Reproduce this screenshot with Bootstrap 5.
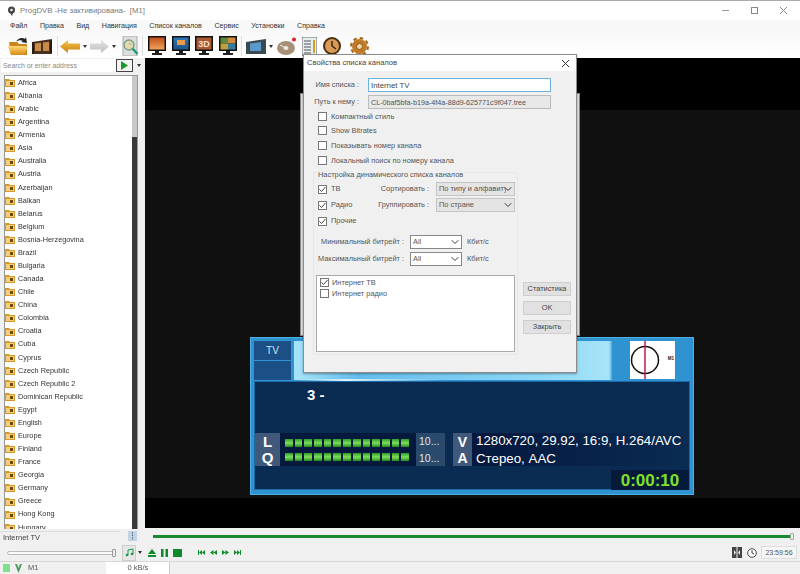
<!DOCTYPE html>
<html lang="ru">
<head>
    <meta charset="UTF-8">
    <meta name="viewport" content="width=device-width, initial-scale=1.0">
    <title>ProgDVB</title>
    <link href="https://cdn.jsdelivr.net/npm/bootstrap@5.3.0/dist/css/bootstrap.min.css" rel="stylesheet">
    <style>
        html, body { margin: 0; width: 800px; height: 574px; overflow: hidden; background: #f0f0f0; }
        body, .form-control, .form-select, .btn { font-family: "Liberation Sans", Arial, sans-serif; font-size: 7.4px; color: #333; line-height: 1; }
        .app-win { width: 800px; height: 574px; position: relative; overflow: hidden; filter: blur(.4px); }

        /* window chrome */
        .title-row { height: 20px; background: #fff; border-top: 1px solid #aaa; padding: 0 7px; color: #7a7a7a; font-size: 7.8px; }
        .win-btns { gap: 20px; margin-right: 5px; }
        .menu-row { height: 14px; background: #f8f8f8; padding-left: 10px; gap: 12.5px; font-size: 7.1px; color: #333; }
        .tool-row { height: 24px; background: linear-gradient(#f9f9f9, #fff); padding-left: 8px; }
        .tb-sep { width: 1px; height: 20px; background: #ddd; }
        .tb-caret { width: 0; height: 0; border: 2.5px solid transparent; border-top: 3px solid #333; border-bottom: 0; }
        .ml2 { margin-left: 2px; } .ml3 { margin-left: 3px; } .ml4 { margin-left: 4px; } .ml5 { margin-left: 5px; }
        .ml6 { margin-left: 6px; } .ml8 { margin-left: 8px; } .ml9 { margin-left: 9px; }

        /* left panel */
        .main-row { height: 470px; }
        .side-panel { width: 145px; background: #f0f0f0; }
        .search-row { height: 13px; margin: 1px 0 3px 1px; }
        .search-box.form-control { width: 115px; height: 13px; padding: 0 2px; border: 0; border-radius: 0; color: #888; background: #fff; font-size: 6.9px; }
        .search-box.form-control::placeholder { color: #888; opacity: 1; }
        .search-go { width: 17px; height: 13px; border: 1px solid #444; background: #f4f4f4; }
        .chan-box { margin-left: 4px; width: 134px; height: 454px; background: #fff; border: 1px solid #999; border-bottom: 0; position: relative; overflow: hidden; }
        .chan-list .list-group-item { border: 0; background: none; padding: 0; height: 13.09px; gap: 3px; border-radius: 0; font-size: 7.3px; color: #333; }
        .chan-scroll { position: absolute; right: 0; top: 0; bottom: 0; width: 5px; background: linear-gradient(#c8c8c8 61px, #3a3a3a 61px); }
        .video-area { flex: 1; background: linear-gradient(#000 52px, #101010 52px, #101010 440px, #000 440px); position: relative; }

        /* bottom */
        .seek-row { height: 16px; }
        .seek-name { width: 120px; height: 13px; margin-top: 3px; border-top: 1px solid #ddd; padding-left: 3px; font-size: 7.5px; color: #444; }
        .seek-track { width: 639px; height: 3px; background: #1a8a2e; margin-left: 16px; position: relative; }
        .seek-thumb { position: absolute; right: -2px; top: -2px; width: 4px; height: 7px; border: 1px solid #9a9; background: #eee; border-radius: 1px; }
        .ctl-row { height: 17px; padding-left: 7px; }
        .vol-track { width: 108px; height: 4px; background: #fafafa; border: 1px solid #bbb; position: relative; border-radius: 2px; }
        .vol-thumb { position: absolute; right: -2px; top: -3px; width: 4px; height: 8px; background: #eee; border: 1px solid #999; border-radius: 1px; }
        .note-btn { width: 14px; height: 16px; margin-left: 7px; background: #e6e6e6; border: 1px solid #ccc; }
        .time-box { width: 36px; height: 13px; margin-left: 4px; margin-right: 3px; background: #f5f5f5; border: 1px solid #ddd; font-size: 7px; color: #555; }
        .stat-row { height: 13px; border-top: 1px solid #d6d6d6; padding-left: 3px; color: #555; font-size: 7.5px; }
        .stat-led { width: 7px; height: 8px; background: #7fe08a; }
        .stat-rate { width: 64px; height: 12px; background: #fff; margin-left: 68px; border-right: 1px solid #ccc; }

        /* dialog */
        .back-sheet { position: absolute; left: 155px; top: 35px; width: 280px; height: 243px; background: #ddd; border: 1px solid #888; }
        .prop-dlg { position: absolute; left: 303px; top: 54px; width: 274px; height: 319px; background: #f0f0f0; border: 1px solid #8c8c8c; box-shadow: 0 1px 2px rgba(0,0,0,.35); z-index: 5; }
        .dlg-title { height: 16px; background: #fff; padding: 0 6px 0 3px; font-size: 7.6px; color: #444; }
        .dlg-body { padding: 7px 0 0 12px; color: #555; }
        .dlg-line { height: 14px; }
        .dlg-line + .dlg-line { margin-top: 3px; }
        .dlg-lab { width: 43px; text-align: right; margin-right: 9px; white-space: nowrap; justify-content: flex-end; display: flex; }
        .dlg-input.form-control { width: 183px; height: 14px; padding: 0 2px; border-radius: 0; font-size: 7.8px; color: #444; border: 1px solid #6fb1dd; box-shadow: none; }
        .dlg-input.dlg-ro { background: #e8e8e8; border-color: #bbb; color: #555; font-size: 7.2px; }
        .chk-line { height: 15px; padding-left: 2px; gap: 4px; }
        .chk-line.chk-first { height: 13px; margin-top: 1px; }
        .form-check-input.dlg-chk { width: 9px; height: 9px; margin: 0; border-radius: 0; border: 1px solid #777; background-color: #fff; flex: none; }
        .form-check-input.dlg-chk:checked { background-color: #fff; border-color: #777; background-size: 9px; background-image: url("data:image/svg+xml,%3csvg xmlns='http://www.w3.org/2000/svg' viewBox='0 0 9 9'%3e%3cpath d='M1.5 4.5l2 2 4-4.5' fill='none' stroke='%23444' stroke-width='1'/%3e%3c/svg%3e"); }
        .form-check-input.dlg-chk:focus { box-shadow: none; }
        .dyn-group { width: 205px; height: 183px; margin: 4px 0 0 -3px; padding: 0 2px 0 4px; border: 1px solid #e7e7e7; border-radius: 2px; }
        .dyn-legend { height: 10px; width: fit-content; margin-top: -2px; background: #f0f0f0; padding-right: 2px; }
        .dyn-line { height: 16px; }
        .dyn-lab { width: 60px; margin-left: auto; text-align: right; margin-right: 7px; }
        .dlg-sel.form-select { width: 79px; height: 14px; padding: 0 8px 0 2px; border-radius: 0; font-size: 7.4px; color: #555; background-color: #e4e4e4; border: 1px solid #c4c4c4; background-position: right 2px center; background-size: 8px 8px; }
        .dlg-sel.sel-white { width: 52px; background-color: #fff; border-color: #888; }
        .rate-line { height: 14px; margin-top: 3px; }
        .rate-first { margin-top: 6px; }
        .rate-lab { width: 86px; text-align: right; margin-right: 6px; white-space: nowrap; }
        .rate-unit { margin-left: 5px; }
        .src-list { width: 199px; height: 77px; margin: 9px 0 0 -2px; background: #fff; border: 1px solid #aaa; padding: 1px 3px; }
        .src-item { height: 11px; gap: 3px; }
        .dlg-btns { width: 48px; margin: 114px 0 0 5px; gap: 5px; }
        .dlg-btn.btn { height: 14px; padding: 0; border-radius: 0; background: #e1e1e1; border: 1px solid #cfcfcf; font-size: 7.4px; color: #444; line-height: 1; }

        /* on-screen info */
        .osd-box { position: absolute; left: 250px; top: 337px; width: 444px; height: 158px; background: #2f93d2; border: 1px solid #4fb0e4; padding: 3px; color: #fff; z-index: 2; }
        .osd-head { height: 39px; position: relative; }
        .osd-head::after { content: ""; position: absolute; left: 40px; right: 60px; bottom: -1px; height: 2px; background: linear-gradient(90deg, transparent, #dff4fd 15%, transparent 45%); }
        .osd-tv { width: 37px; margin-right: 3px; gap: 1px; }
        .osd-tv > div { flex: 1; background: #1c4f86; font-size: 10px; color: #cfe6f6; }
        .osd-glass { width: 318px; background: linear-gradient(90deg, #a8e4f9, #63bdec 20%, #8fd9f6 80%, #a8e4f9 99%, #4aa8dc); }
        .osd-logo { width: 45px; height: 38px; margin-left: 18px; background: #fff; position: relative; }
        .osd-m1 { position: absolute; right: 1px; top: 16px; font-size: 4.5px; font-weight: 700; color: #222; }
        .osd-panel { height: 109px; margin-top: 1px; background: #0a2b52; border: 1px solid #1f6aa6; }
        .osd-num { height: 25px; padding-left: 52px; font-size: 15px; font-weight: 700; }
        .osd-mid { height: 33px; margin-top: 26px; }
        .osd-lq { width: 25px; background: #40597a; font-size: 15px; font-weight: 700; line-height: 16px; }
        .osd-bars { width: 136px; background: #05193c; gap: 6px; padding-left: 5px; }
        .osd-bar-row { gap: 2px; }
        .osd-seg { width: 7.7px; height: 8px; background: linear-gradient(#2d9a2a, #7fe05a 50%, #1f8a20); }
        .osd-pct { width: 29px; background: #2b4a6b; font-size: 10.5px; padding-left: 3px; gap: 6px; color: #dfe8f0; }
        .osd-va { width: 19px; margin-left: 8px; background: #40597a; font-size: 14px; font-weight: 700; line-height: 16px; }
        .osd-info { flex: 1; background: linear-gradient(90deg, #05183e, #0a2b52); padding-left: 4px; font-size: 13.3px; gap: 4px; white-space: nowrap; }
        .osd-foot { height: 20px; margin-top: 4px; }
        .osd-timer { width: 78px; background: #061a3a; color: #7fe02a; font-size: 17px; font-weight: 700; }
    </style>
</head>
<body>
<svg width="0" height="0" class="position-absolute">
    <defs>
        <linearGradient id="gFold" x1="0" y1="0" x2="0" y2="1"><stop offset="0" stop-color="#ffd977"/><stop offset="1" stop-color="#d88a14"/></linearGradient>
        <linearGradient id="gBack" x1="0" y1="0" x2="0" y2="1"><stop offset="0" stop-color="#f7c94a"/><stop offset="1" stop-color="#c97d0c"/></linearGradient>
        <linearGradient id="gFwd" x1="0" y1="0" x2="0" y2="1"><stop offset="0" stop-color="#e6e6e6"/><stop offset="1" stop-color="#bdbdbd"/></linearGradient>
        <linearGradient id="gSun" x1="0" y1="0" x2="0" y2="1"><stop offset="0" stop-color="#c0501c"/><stop offset="1" stop-color="#f2a45c"/></linearGradient>
        <linearGradient id="gBlue" x1="0" y1="0" x2="0" y2="1"><stop offset="0" stop-color="#2f78b8"/><stop offset="1" stop-color="#1c5288"/></linearGradient>
        <symbol id="icoFolder" viewBox="0 0 10 9"><path d="M0 1h4l1 1h5v7H0z" fill="#d69a2c"/><path d="M1 3h8v5H1z" fill="#f5cf78"/><path d="M5 4h3v3H5z" fill="#6a4a12"/></symbol>
        <symbol id="icoFilm" viewBox="0 0 20 15"><path d="M0 3l20-3v15H0z" fill="#4a3020"/><path d="M3 4.500l6-.8v8.300H3zM11 3.500l6-.8v9.300h-6z" fill="#c98a4a"/><path d="M0 3h2v12H0zM18 1h2v13h-2z" fill="#2a1a10"/></symbol>
        <symbol id="icoMon" viewBox="0 0 18 20"><path d="M0 0h18v15H0z" fill="#111"/><path d="M7 15h4v2h3v2H4v-2h3z" fill="#222"/></symbol>
    </defs>
</svg>

<div class="app-win">
    <div class="title-row d-flex align-items-center">
        <svg width="9" height="10" viewBox="0 0 9 10"><circle cx="4.500" cy="4" r="3.500" fill="#444"/><circle cx="4.500" cy="4" r="1.300" fill="#eee"/><path d="M3 7l2 3 1-3z" fill="#444"/></svg>
        <span class="ml4">ProgDVB -Не зактивирована-&nbsp; [M1]</span>
        <div class="win-btns d-flex align-items-center ms-auto">
            <svg width="9" height="9" viewBox="0 0 9 9"><path d="M1 4.500h7" stroke="#999"/></svg>
            <svg width="9" height="9" viewBox="0 0 9 9"><rect x="1.500" y="1.500" width="6" height="6" fill="none" stroke="#888"/></svg>
            <svg width="9" height="9" viewBox="0 0 9 9"><path d="M1 1l7 7M8 1L1 8" stroke="#888"/></svg>
        </div>
    </div>

    <div class="menu-row d-flex align-items-center">
        <span>Файл</span><span>Правка</span><span>Вид</span><span>Навигация</span><span>Список каналов</span><span>Сервис</span><span>Установки</span><span>Справка</span>
    </div>

    <div class="tool-row d-flex align-items-center">
        <svg width="22" height="20" viewBox="0 0 22 20"><path d="M1 6h8l2 2h8v11H3z" fill="#c9851a"/><path d="M0 10h17l3 1-4 8H3z" fill="url(#gFold)"/><path d="M8 6c2-4 6-5 9-3l1-2 1 6-6-1 2-1c-2-1-5-1-7 1z" fill="#222"/></svg>
        <svg width="20" height="15" class="ml2"><use href="#icoFilm"/></svg>
        <div class="tb-sep ml5"></div>
        <svg width="20" height="13" viewBox="0 0 20 13" class="ml2"><path d="M0 6.500L8 0v3.500h12v6H8V13z" fill="url(#gBack)"/></svg>
        <span class="tb-caret ml3"></span>
        <svg width="19" height="13" viewBox="0 0 19 13" class="ml3"><path d="M19 6.500L11 0v3.500H0v6h11V13z" fill="url(#gFwd)"/></svg>
        <span class="tb-caret ml3"></span>
        <svg width="18" height="20" viewBox="0 0 18 20" class="ml5"><path d="M2 0h14v20H2z" fill="#dcdedc" stroke="#a9aca9"/><circle cx="8" cy="9" r="5" fill="#e8d8a8" stroke="#7aa094" stroke-width="1.500"/><path d="M8 6v3h3" fill="#9ac4d8"/><path d="M11.500 12.500l5 5.500" stroke="#1f9a78" stroke-width="2.500"/></svg>
        <div class="tb-sep ml3"></div>
        <svg width="18" height="20" class="ml5"><use href="#icoMon"/><rect x="1.500" y="1.500" width="15" height="12" fill="url(#gSun)"/></svg>
        <svg width="18" height="20" class="ml6"><use href="#icoMon"/><rect x="1.500" y="1.500" width="15" height="12" fill="url(#gBlue)"/><rect x="5" y="4" width="8" height="5" fill="#e89a4a"/></svg>
        <svg width="18" height="20" class="ml5"><use href="#icoMon"/><rect x="1.500" y="1.500" width="15" height="12" fill="#a85a34"/><text x="9" y="11" text-anchor="middle" font-family="Liberation Sans" font-size="9" font-weight="700" fill="#f2dcc8">3D</text></svg>
        <svg width="18" height="20" class="ml6"><use href="#icoMon"/><rect x="1.500" y="1.500" width="7.500" height="6" fill="#5d8a3a"/><rect x="9" y="1.500" width="7.500" height="6" fill="#d08a3a"/><rect x="1.500" y="7.500" width="7.500" height="6" fill="#c0a03a"/><rect x="9" y="7.500" width="7.500" height="6" fill="#3a7a9a"/></svg>
        <div class="tb-sep ml4"></div>
        <svg width="20" height="15" viewBox="0 0 20 15" class="ml4"><path d="M0 3l20-3v15H0z" fill="#3a4a50"/><path d="M4 4.500l11-1.500v9H4z" fill="#5a9ac8"/></svg>
        <span class="tb-caret ml3"></span>
        <svg width="20" height="18" viewBox="0 0 20 18" class="ml4"><ellipse cx="9" cy="11" rx="9" ry="7" fill="#a89078"/><ellipse cx="9" cy="11" rx="2.500" ry="2" fill="#f0e8de"/><path d="M3 8l4 2" stroke="#eee"/><circle cx="17" cy="2.500" r="2" fill="#e02020"/></svg>
        <svg width="15" height="19" viewBox="0 0 15 19" class="ml5"><path d="M0 0h15v19H0z" fill="#e8efe8" stroke="#667"/><path d="M2 4h7M2 7h7M2 10h7M2 13h7M2 16h7" stroke="#556"/><path d="M11 3h2v13h-2z" fill="#d8a020"/></svg>
        <svg width="18" height="18" viewBox="0 0 18 18" class="ml6"><circle cx="9" cy="9" r="8" fill="#d89a54" stroke="#4a2e14" stroke-width="2"/><path d="M9 9V4M9 9l4 3" stroke="#3a2410" stroke-width="1.500"/></svg>
        <svg width="19" height="19" viewBox="0 0 19 19" class="ml9"><circle cx="9.500" cy="9.500" r="7.500" fill="#c07a28"/><circle cx="9.500" cy="9.500" r="8.500" fill="none" stroke="#a8651c" stroke-width="2" stroke-dasharray="3.500 3.170"/><circle cx="9.500" cy="9.500" r="3" fill="#f2d8a8" stroke="#8a5414"/></svg>
    </div>

    <div class="main-row d-flex">
        <div class="side-panel">
            <div class="search-row d-flex align-items-center">
                <input class="search-box form-control" type="text" placeholder="Search or enter address">
                <div class="search-go d-flex align-items-center justify-content-center">
                    <svg width="7" height="9" viewBox="0 0 7 9"><path d="M0 0l7 4.500L0 9z" fill="#1a9a2a"/></svg>
                </div>
                <span class="tb-caret ml4"></span>
            </div>
            <div class="chan-box">
                <div id="chanList" class="chan-list list-group"></div>
                <div class="chan-scroll"></div>
            </div>
        </div>
        <div class="video-area">
            <div class="back-sheet"></div>
        </div>
    </div>

    <div class="seek-row d-flex align-items-center">
        <div class="seek-name d-flex align-items-center">Internet TV</div>
        <svg width="9" height="10" viewBox="0 0 9 10" class="ml8"><rect width="9" height="10" fill="#c4d4e4"/><path d="M4.500 1v8" stroke="#47688a" stroke-dasharray="1.500 1"/></svg>
        <div class="seek-track"><span class="seek-thumb"></span></div>
    </div>

    <div class="ctl-row d-flex align-items-center">
        <div class="vol-track"><span class="vol-thumb"></span></div>
        <div class="note-btn d-flex align-items-center justify-content-center">
            <svg width="9" height="9" viewBox="0 0 9 9"><path d="M3 7V2l5-1v5" fill="none" stroke="#1a9a4a"/><circle cx="2" cy="7" r="1.300" fill="#1a9a4a"/><circle cx="7" cy="6" r="1.300" fill="#1a9a4a"/></svg>
        </div>
        <span class="tb-caret ml2"></span>
        <svg width="8" height="8" viewBox="0 0 8 8" class="ml6"><path d="M4 0l4 5H0zM0 6h8v2H0z" fill="#0f8a2a"/></svg>
        <svg width="7" height="8" viewBox="0 0 7 8" class="ml5"><path d="M0 0h2.500v8H0zM4.500 0H7v8H4.500z" fill="#0f8a2a"/></svg>
        <svg width="9" height="8" viewBox="0 0 9 8" class="ml5"><path d="M0 0h9v8H0z" fill="#0f8a2a"/></svg>
        <svg width="7" height="5" viewBox="0 0 7 5" class="ms-3"><path d="M0 0h1v5H0zM4 0v5L1 2.500zM7 0v5L4 2.500z" fill="#0f8a2a"/></svg>
        <svg width="7" height="5" viewBox="0 0 7 5" class="ml5"><path d="M3.500 0v5L0 2.500zM7 0v5L3.500 2.500z" fill="#0f8a2a"/></svg>
        <svg width="7" height="5" viewBox="0 0 7 5" class="ml5"><path d="M0 0v5l3.500-2.500zM3.500 0v5L7 2.500z" fill="#0f8a2a"/></svg>
        <svg width="7" height="5" viewBox="0 0 7 5" class="ml5"><path d="M0 0v5l3-2.500zM3 0v5l3-2.500zM6 0h1v5H6z" fill="#0f8a2a"/></svg>
        <svg width="10" height="11" viewBox="0 0 10 11" class="ms-auto"><rect width="10" height="11" fill="#444"/><path d="M5 0v11" stroke="#eee"/><path d="M2 3v5l2-2.500zM8 3v5L6 5.500z" fill="#eee"/></svg>
        <svg width="10" height="10" viewBox="0 0 10 10" class="ml5"><circle cx="5" cy="5" r="4.300" fill="#fff" stroke="#444"/><path d="M5 2v3l2 1" fill="none" stroke="#444"/></svg>
        <div class="time-box d-flex align-items-center justify-content-center">23:59:56</div>
    </div>

    <div class="stat-row d-flex align-items-center">
        <span class="stat-led"></span>
        <svg width="7" height="9" viewBox="0 0 7 9" class="ml5"><path d="M0 0l3.500 9L7 0H5L3.500 4 2 0z" fill="#4a9a5a"/></svg>
        <span class="ml6">M1</span>
        <div class="stat-rate d-flex align-items-center justify-content-center">0 kB/s</div>
    </div>

    <!-- Channel list properties dialog -->
    <div class="prop-dlg">
        <div class="dlg-title d-flex align-items-center justify-content-between">
            <span>Свойства списка каналов</span>
            <svg width="9" height="9" viewBox="0 0 9 9"><path d="M1 1l7 7M8 1L1 8" stroke="#333"/></svg>
        </div>
        <div class="dlg-body">
            <div class="dlg-line d-flex align-items-center">
                <span class="dlg-lab">Имя списка :</span>
                <input class="dlg-input form-control" type="text" value="Internet TV">
            </div>
            <div class="dlg-line d-flex align-items-center">
                <span class="dlg-lab">Путь к нему :</span>
                <input class="dlg-input dlg-ro form-control" type="text" readonly value="CL-0baf5bfa-b19a-4f4a-88d9-625771c9f047.tree">
            </div>
            <label class="chk-line chk-first d-flex align-items-center"><input class="form-check-input dlg-chk" type="checkbox">Компактный стиль</label>
            <label class="chk-line d-flex align-items-center"><input class="form-check-input dlg-chk" type="checkbox">Show Bitrates</label>
            <label class="chk-line d-flex align-items-center"><input class="form-check-input dlg-chk" type="checkbox">Показывать номер канала</label>
            <label class="chk-line d-flex align-items-center"><input class="form-check-input dlg-chk" type="checkbox">Локальный поиск по номеру канала</label>

            <div class="d-flex align-items-start">
                <div class="dyn-group">
                    <div class="dyn-legend">Настройка динамического списка каналов</div>
                    <div class="dyn-line d-flex align-items-center">
                        <label class="d-flex align-items-center gap-1"><input class="form-check-input dlg-chk" type="checkbox" checked>ТВ</label>
                        <span class="dyn-lab">Сортировать :</span>
                        <select class="dlg-sel form-select"><option>По типу и алфавиту</option></select>
                    </div>
                    <div class="dyn-line d-flex align-items-center">
                        <label class="d-flex align-items-center gap-1"><input class="form-check-input dlg-chk" type="checkbox" checked>Радио</label>
                        <span class="dyn-lab">Группировать :</span>
                        <select class="dlg-sel form-select"><option>По стране</option></select>
                    </div>
                    <div class="dyn-line d-flex align-items-center">
                        <label class="d-flex align-items-center gap-1"><input class="form-check-input dlg-chk" type="checkbox" checked>Прочие</label>
                    </div>
                    <div class="rate-line rate-first d-flex align-items-center">
                        <span class="rate-lab">Минимальный битрейт :</span>
                        <select class="dlg-sel sel-white form-select"><option>All</option></select>
                        <span class="rate-unit">Кбит/с</span>
                    </div>
                    <div class="rate-line d-flex align-items-center">
                        <span class="rate-lab">Максимальный битрейт :</span>
                        <select class="dlg-sel sel-white form-select"><option>All</option></select>
                        <span class="rate-unit">Кбит/с</span>
                    </div>
                    <div class="src-list">
                        <label class="src-item d-flex align-items-center"><input class="form-check-input dlg-chk" type="checkbox" checked>Интернет ТВ</label>
                        <label class="src-item d-flex align-items-center"><input class="form-check-input dlg-chk" type="checkbox">Интернет радио</label>
                    </div>
                </div>
                <div class="dlg-btns d-flex flex-column">
                    <button type="button" class="dlg-btn btn">Статистика</button>
                    <button type="button" class="dlg-btn btn">OK</button>
                    <button type="button" class="dlg-btn btn">Закрыть</button>
                </div>
            </div>
        </div>
    </div>

    <!-- Channel info overlay -->
    <div class="osd-box">
        <div class="osd-head d-flex">
            <div class="osd-tv d-flex flex-column">
                <div class="d-flex align-items-center justify-content-center">TV</div>
                <div></div>
            </div>
            <div class="osd-glass"></div>
            <div class="osd-logo">
                <svg width="45" height="38" viewBox="0 0 45 38"><circle cx="15" cy="19" r="13.500" fill="none" stroke="#111" stroke-width="1.500"/><path d="M15 0v38" stroke="#c2185b" stroke-width="1.500"/></svg>
                <span class="osd-m1">M1</span>
            </div>
        </div>
        <div class="osd-panel">
            <div class="osd-num d-flex align-items-center">3 -</div>
            <div class="osd-mid d-flex">
                <div class="osd-lq d-flex flex-column align-items-center justify-content-center"><span>L</span><span>Q</span></div>
                <div id="osdBars" class="osd-bars d-flex flex-column justify-content-center"></div>
                <div class="osd-pct d-flex flex-column justify-content-center"><span>10...</span><span>10...</span></div>
                <div class="osd-va d-flex flex-column align-items-center justify-content-center"><span>V</span><span>A</span></div>
                <div class="osd-info d-flex flex-column justify-content-center"><span>1280x720, 29.92, 16:9, H.264/AVC</span><span>Стерео, AAC</span></div>
            </div>
            <div class="osd-foot d-flex justify-content-end">
                <div class="osd-timer d-flex align-items-center justify-content-center">0:00:10</div>
            </div>
        </div>
    </div>
</div>

<script>
    const channels = ["Africa", "Albania", "Arabic", "Argentina", "Armenia", "Asia", "Australia", "Austria", "Azerbaijan",
        "Balkan", "Belarus", "Belgium", "Bosnia-Herzegovina", "Brazil", "Bulgaria", "Canada", "Chile", "China", "Colombia",
        "Croatia", "Cuba", "Cyprus", "Czech Republic", "Czech Republic 2", "Dominican Republic", "Egypt", "English", "Europe",
        "Finland", "France", "Georgia", "Germany", "Greece", "Hong Kong", "Hungary"];

    document.getElementById("chanList").innerHTML = channels.map(name => `
        <div class="list-group-item d-flex align-items-center">
            <svg width="10" height="9"><use href="#icoFolder"/></svg><span>${name}</span>
        </div>`).join("");

    const barRow = `<div class="osd-bar-row d-flex">${'<span class="osd-seg"></span>'.repeat(13)}</div>`;
    document.getElementById("osdBars").innerHTML = barRow + barRow;
</script>
<script src="https://cdn.jsdelivr.net/npm/bootstrap@5.3.0/dist/js/bootstrap.bundle.min.js"></script>
</body>
</html>
